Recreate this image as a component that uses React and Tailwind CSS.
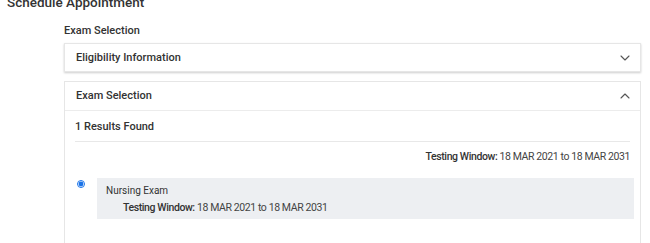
import { ChevronDown, ChevronUp } from "lucide-react";

export default function App() {
    return (
        <div className="min-h-screen bg-white text-[#333] font-['Roboto',sans-serif] overflow-hidden">
            <h1 className="-mt-[8px] pl-[7px] text-[13.5px] leading-[20px] font-medium text-[#333]">
                Schedule Appointment
            </h1>

            <div className="pl-[64px] pr-[9px]">
                <h2 className="mt-[11px] text-[11px] leading-[16px] font-medium">Exam Selection</h2>

                {/* Eligibility card */}
                <div className="mt-[4px] h-[29px] border border-[#e6e6e6] shadow-[0_1px_2px_rgba(0,0,0,0.2)] flex items-center justify-between pl-[11px] pr-[7px]">
                    <span className="text-[11px] leading-[16px] font-medium">Eligibility Information</span>
                    <ChevronDown size={16} strokeWidth={1.6} className="text-[#555]" />
                </div>

                {/* Exam selection card */}
                <div className="mt-[9px] border border-[#e6e6e6] h-[200px]">
                    <div className="h-[29px] flex items-center justify-between pl-[11px] pr-[7px] border-b border-[#ececec]">
                        <span className="text-[11px] leading-[16px] font-medium">Exam Selection</span>
                        <ChevronUp size={16} strokeWidth={1.6} className="text-[#555]" />
                    </div>

                    <div className="px-[10px]">
                        <div className="pt-[8px] pb-[6px] border-b border-[#e8e8e8] text-[11px] font-medium leading-[16px]">
                            1 Results Found
                        </div>
                        <div className="mt-[7px] text-right text-[10.5px] leading-[16px] tracking-[-0.4px]">
                            <span className="font-medium">Testing Window:</span>{" "}
                            <span className="text-[#444]">18 MAR 2021 to 18 MAR 2031</span>
                        </div>

                        <div className="mt-[13px] flex items-start">
                            <input
                                type="radio"
                                defaultChecked
                                className="mt-[2px] ml-[2px] w-[8px] h-[8px] accent-[#1a73e8]"
                            />
                            <div className="ml-[12px] mr-[-4px] flex-1 bg-[#edeff2] pl-[9px] pt-[4px] pb-[3px] text-[10.5px] leading-[17px]">
                                <div className="text-[10px]">Nursing Exam</div>
                                <div className="pl-[17px] tracking-[-0.4px]">
                                    <span className="font-medium">Testing Window:</span>{" "}
                                    <span className="text-[#444]">18 MAR 2021 to 18 MAR 2031</span>
                                </div>
                            </div>
                        </div>
                    </div>
                </div>
            </div>
        </div>
    );
}
